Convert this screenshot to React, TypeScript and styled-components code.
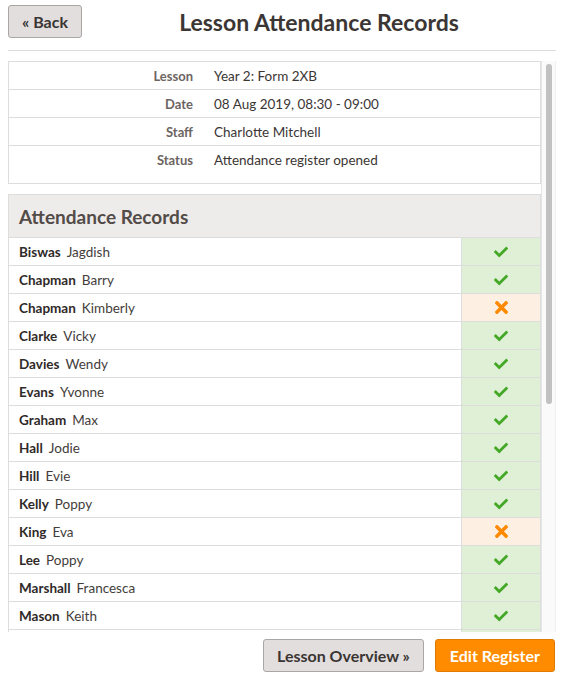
import React from 'react'
import styled, { createGlobalStyle } from 'styled-components'
import { FaCheck, FaTimes } from 'react-icons/fa'

const GlobalStyle = createGlobalStyle`
  html, body {
    margin: 0;
    padding: 0;
    background: #ffffff;
  }
  body {
    font-family: 'Lato', 'Open Sans', sans-serif;
    color: #3b3634;
  }
`

const Page = styled.div`
  width: 548px;
  margin-left: 8px;
  display: flex;
  flex-direction: column;
`

const Header = styled.header`
  display: flex;
  align-items: center;
  padding-top: 5px;
  padding-bottom: 12px;
  border-bottom: 1px solid #dddddd;
`

const Button = styled.button<{ $primary?: boolean }>`
  height: 33px;
  padding: 0 ${p => (p.$primary ? 14 : 13)}px;
  border-radius: 3px;
  border: 1px solid ${p => (p.$primary ? '#e07a00' : '#aaa6a4')};
  background: ${p => (p.$primary ? '#ff8c00' : '#e2dedd')};
  color: ${p => (p.$primary ? '#ffffff' : '#3a3533')};
  font-family: 'Lato', sans-serif;
  font-size: 16px;
  font-weight: 700;
  cursor: pointer;
  white-space: nowrap;
`

const Title = styled.h1`
  flex: 1;
  margin: 0;
  text-align: center;
  font-size: 23px;
  font-weight: 700;
  color: #3b3634;
`

const ScrollArea = styled.div`
  margin-top: 10px;
  height: 571px;
  display: flex;
`

const Viewport = styled.div`
  flex: 1;
  min-width: 0;
  overflow: hidden;
`

const ScrollTrack = styled.div`
  width: 15px;
  box-sizing: border-box;
  padding: 3px 3px 0 4px;
  background: #fafafa;
  border-left: 1px solid #e6e6e6;
  border-right: 1px solid #efefef;
`

const ScrollThumb = styled.div`
  height: 340px;
  border-radius: 4px;
  background: #c1c1c1;
`

const InfoBox = styled.div`
  border: 1px solid #dddddd;
  padding-bottom: 10px;
`

const InfoRow = styled.div`
  display: grid;
  grid-template-columns: 191px 1fr;
  height: 27px;
  align-items: center;
  & + & {
    border-top: 1px solid #dddddd;
  }
`

const InfoLabel = styled.div`
  text-align: right;
  padding-right: 7px;
  font-size: 13px;
  font-weight: 700;
  color: #6c6461;
`

const InfoValue = styled.div`
  padding-left: 14px;
  font-size: 13.5px;
  color: #3b3634;
`

const Panel = styled.section`
  margin-top: 10px;
  border: 1px solid #dddddd;
`

const PanelTitle = styled.h2`
  margin: 0;
  height: 42px;
  display: flex;
  align-items: center;
  padding-left: 10px;
  background: #eeeceb;
  border-bottom: 1px solid #dddddd;
  font-size: 19px;
  font-weight: 700;
  color: #524b48;
`

const StudentRow = styled.div`
  display: grid;
  grid-template-columns: 1fr 79px;
  height: 27px;
  & + & {
    border-top: 1px solid #dddddd;
  }
`

const Name = styled.div`
  display: flex;
  align-items: center;
  gap: 6px;
  padding-left: 10px;
  font-size: 13.5px;
  color: #433d3a;
  b {
    font-weight: 700;
    color: #2f2a28;
  }
`

const Mark = styled.div<{ $present: boolean }>`
  display: flex;
  align-items: center;
  justify-content: center;
  border-left: 1px solid #dddddd;
  background: ${p => (p.$present ? '#dff0d6' : '#fdf0e2')};
  color: ${p => (p.$present ? '#44a826' : '#ff8a00')};
`

const Footer = styled.footer`
  display: flex;
  justify-content: flex-end;
  gap: 11px;
  margin-top: 7px;
  padding-right: 1px;
`

const info = [
  { label: 'Lesson', value: 'Year 2: Form 2XB' },
  { label: 'Date', value: '08 Aug 2019, 08:30 - 09:00' },
  { label: 'Staff', value: 'Charlotte Mitchell' },
  { label: 'Status', value: 'Attendance register opened' },
]

const students: { last: string; first: string; present: boolean }[] = [
  { last: 'Biswas', first: 'Jagdish', present: true },
  { last: 'Chapman', first: 'Barry', present: true },
  { last: 'Chapman', first: 'Kimberly', present: false },
  { last: 'Clarke', first: 'Vicky', present: true },
  { last: 'Davies', first: 'Wendy', present: true },
  { last: 'Evans', first: 'Yvonne', present: true },
  { last: 'Graham', first: 'Max', present: true },
  { last: 'Hall', first: 'Jodie', present: true },
  { last: 'Hill', first: 'Evie', present: true },
  { last: 'Kelly', first: 'Poppy', present: true },
  { last: 'King', first: 'Eva', present: false },
  { last: 'Lee', first: 'Poppy', present: true },
  { last: 'Marshall', first: 'Francesca', present: true },
  { last: 'Mason', first: 'Keith', present: true },
  { last: 'Morris', first: 'Daniel', present: true },
  { last: 'Patel', first: 'Aisha', present: true },
  { last: 'Roberts', first: 'Oliver', present: true },
  { last: 'Shaw', first: 'Lily', present: true },
  { last: 'Singh', first: 'Arjun', present: true },
  { last: 'Taylor', first: 'Grace', present: true },
  { last: 'Thompson', first: 'Harry', present: true },
  { last: 'Walker', first: 'Sophie', present: true },
  { last: 'Ward', first: 'Jack', present: true },
  { last: 'White', first: 'Emily', present: true },
  { last: 'Wilson', first: 'Thomas', present: true },
  { last: 'Wood', first: 'Isla', present: true },
  { last: 'Young', first: 'Noah', present: true },
]

const App: React.FC = () => {
  return (
    <>
      <GlobalStyle />
      <Page>
        <Header>
          <Button>« Back</Button>
          <Title>Lesson Attendance Records</Title>
        </Header>
        <ScrollArea>
          <Viewport>
            <InfoBox>
              {info.map(i => (
                <InfoRow key={i.label}>
                  <InfoLabel>{i.label}</InfoLabel>
                  <InfoValue>{i.value}</InfoValue>
                </InfoRow>
              ))}
            </InfoBox>
            <Panel>
              <PanelTitle>Attendance Records</PanelTitle>
              {students.map((s, idx) => (
                <StudentRow key={idx}>
                  <Name>
                    <b>{s.last}</b>
                    <span>{s.first}</span>
                  </Name>
                  <Mark $present={s.present}>
                    {s.present ? <FaCheck size={14} /> : <FaTimes size={19} />}
                  </Mark>
                </StudentRow>
              ))}
            </Panel>
          </Viewport>
          <ScrollTrack>
            <ScrollThumb />
          </ScrollTrack>
        </ScrollArea>
        <Footer>
          <Button>Lesson Overview »</Button>
          <Button $primary>Edit Register</Button>
        </Footer>
      </Page>
    </>
  )
}

export default App
